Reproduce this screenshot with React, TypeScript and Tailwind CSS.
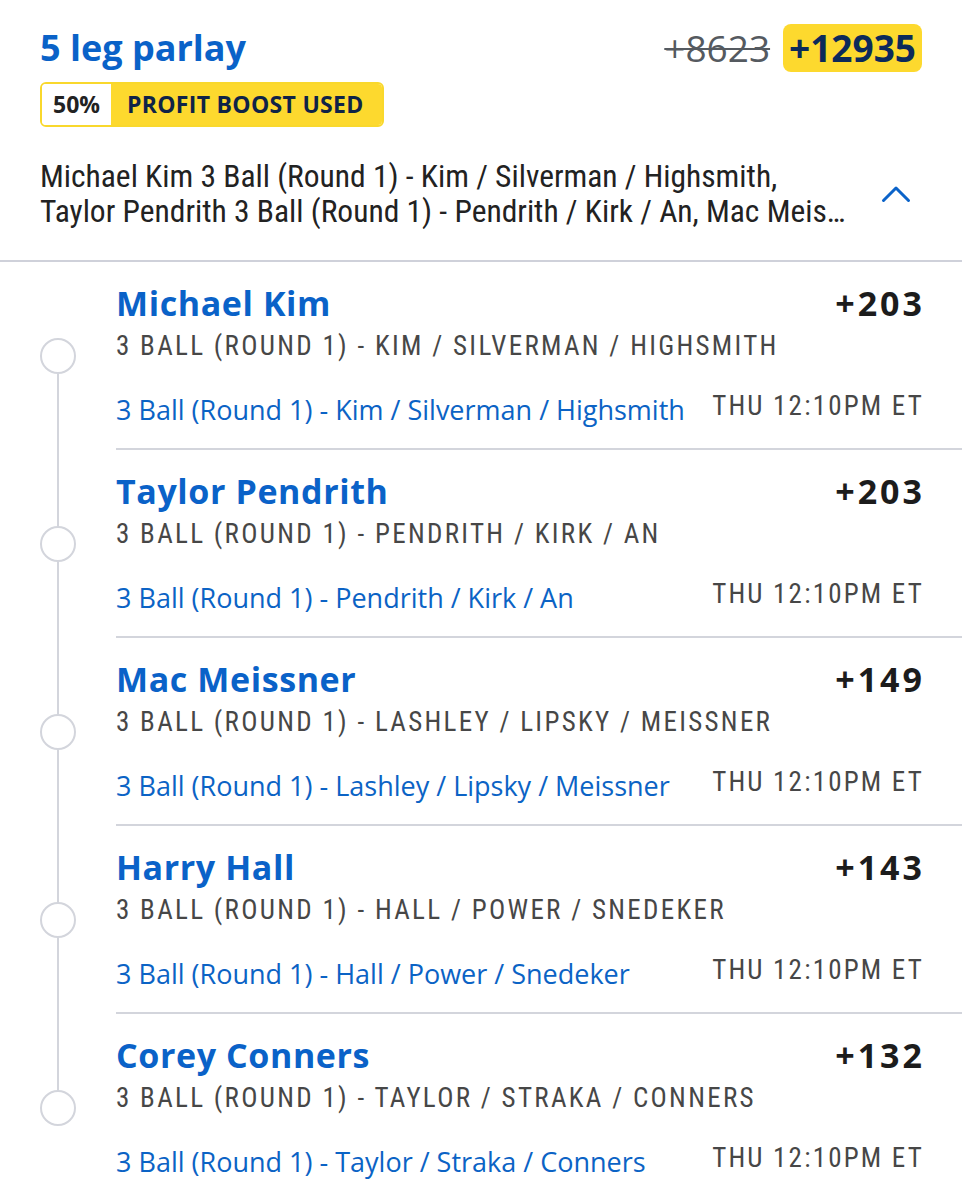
import React from "react";

type Leg = {
  name: string;
  odds: string;
  sub: string;
  link: string;
};

const legs: Leg[] = [
  {
    name: "Michael Kim",
    odds: "+203",
    sub: "3 Ball (Round 1) - Kim / Silverman / Highsmith",
    link: "3 Ball (Round 1) - Kim / Silverman / Highsmith",
  },
  {
    name: "Taylor Pendrith",
    odds: "+203",
    sub: "3 Ball (Round 1) - Pendrith / Kirk / An",
    link: "3 Ball (Round 1) - Pendrith / Kirk / An",
  },
  {
    name: "Mac Meissner",
    odds: "+149",
    sub: "3 Ball (Round 1) - Lashley / Lipsky / Meissner",
    link: "3 Ball (Round 1) - Lashley / Lipsky / Meissner",
  },
  {
    name: "Harry Hall",
    odds: "+143",
    sub: "3 Ball (Round 1) - Hall / Power / Snedeker",
    link: "3 Ball (Round 1) - Hall / Power / Snedeker",
  },
  {
    name: "Corey Conners",
    odds: "+132",
    sub: "3 Ball (Round 1) - Taylor / Straka / Conners",
    link: "3 Ball (Round 1) - Taylor / Straka / Conners",
  },
];

const heading = "font-['Open_Sans',_'Noto_Sans',_sans-serif]";
const cond = "font-['Roboto_Condensed',_'Roboto',_sans-serif]";

function ChevronUp() {
  return (
    <svg width="30" height="18" viewBox="0 0 30 18" fill="none">
      <path
        d="M2.5 15.5 L15 3 L27.5 15.5"
        stroke="#0b63c9"
        strokeWidth="3"
        strokeLinecap="round"
        strokeLinejoin="round"
      />
    </svg>
  );
}

function LegRow({ leg, first, last }: { leg: Leg; first: boolean; last: boolean }) {
  return (
    <div className="flex">
      <div className="w-[116px] h-[188px] flex flex-col items-center shrink-0">
        <div className={`w-[2px] flex-1 ${first ? "bg-transparent" : "bg-[#d3d5dc]"}`} />
        <div className="w-[36px] h-[36px] rounded-full border-2 border-[#d3d5dc] bg-white shrink-0" />
        <div className={`w-[2px] flex-1 ${last ? "bg-transparent" : "bg-[#d3d5dc]"}`} />
      </div>
      <div
        className={`flex-1 h-[188px] pt-[21px] pr-[40px] flex flex-col ${
          last ? "" : "border-b-2 border-[#d3d5dc]"
        }`}
      >
        <div className="flex justify-between items-start">
          <div className={`${heading} text-[34px] leading-[40px] font-bold tracking-[0.6px] text-[#0a62c8]`}>
            {leg.name}
          </div>
          <div
            className={`${heading} text-[34px] leading-[40px] font-bold tracking-[3px] -mr-[3px] text-[#1c1c1c]`}
          >
            {leg.odds}
          </div>
        </div>
        <div
          className={`${cond} mt-[7px] text-[27px] leading-[32px] uppercase tracking-[2.3px] text-[#474747] whitespace-nowrap`}
        >
          {leg.sub}
        </div>
        <div className="mt-[32px] flex justify-between items-start">
          <div className={`${heading} text-[27px] leading-[32px] text-[#0b63c5] whitespace-nowrap`}>
            {leg.link}
          </div>
          <div
            className={`${cond} -mt-[4px] text-[27px] leading-[32px] uppercase tracking-[2.2px] -mr-[2px] text-[#474747] whitespace-nowrap`}
          >
            THU 12:10PM ET
          </div>
        </div>
      </div>
    </div>
  );
}

export default function App() {
  return (
    <div className="w-[962px] h-[1200px] overflow-hidden bg-white">
      <div className="px-[40px] pt-[24px]">
        <div className="flex items-center justify-between">
          <div className={`${heading} text-[36px] leading-[44px] font-bold text-[#0a62c8]`}>
            5 leg parlay
          </div>
          <div className="flex items-center gap-[13px]">
            <span className={`${heading} text-[37px] leading-[44px] text-[#555a60] line-through decoration-2`}>
              +8623
            </span>
            <span
              className={`${heading} h-[48px] flex items-center px-[6px] rounded-[8px] bg-[#fdd92e] text-[37px] font-bold text-[#0c2a5a]`}
            >
              +12935
            </span>
          </div>
        </div>
        <div className="mt-[10px] inline-flex h-[45px] rounded-[6px] border-2 border-[#f9d82c] overflow-hidden">
          <div
            className={`${heading} w-[69px] bg-white flex items-center justify-center text-[23px] font-bold text-[#222]`}
          >
            50%
          </div>
          <div
            className={`${heading} bg-[#fdd92e] flex items-center pl-[16px] pr-[18px] text-[23px] tracking-[0.3px] font-bold text-[#0f2347]`}
          >
            PROFIT BOOST USED
          </div>
        </div>
        <div className="mt-[32px] mb-[31px] flex items-center">
          <div className={`${cond} w-[808px] text-[31.5px] leading-[35px] text-[#222] flex flex-col`}>
            <div className="truncate">Michael Kim 3 Ball (Round 1) - Kim / Silverman / Highsmith,</div>
            <div className="truncate">
              Taylor Pendrith 3 Ball (Round 1) - Pendrith / Kirk / An, Mac Meissner 3 Ball (Round 1) - Lashley /
              Lipsky / Meissner, Harry Hall 3 Ball (Round 1) - Hall / Power / Snedeker, Corey Conners 3 Ball
              (Round 1) - Taylor / Straka / Conners
            </div>
          </div>
          <div className="flex-1 flex justify-end pr-[11px]">
            <ChevronUp />
          </div>
        </div>
      </div>
      <div className="h-[2px] bg-[#cfd1da]" />
      {legs.map((leg, i) => (
        <LegRow key={leg.name} leg={leg} first={i === 0} last={i === legs.length - 1} />
      ))}
    </div>
  );
}
